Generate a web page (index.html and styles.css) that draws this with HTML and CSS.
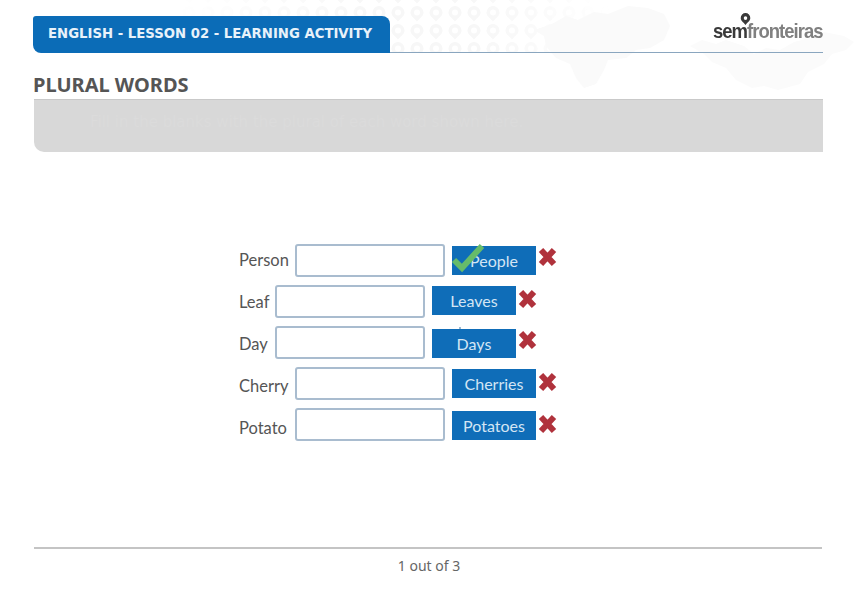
FILE: index.html
```html
<!DOCTYPE html>
<html lang="en">
<head>
    <meta charset="UTF-8">
    <meta name="viewport" content="width=device-width, initial-scale=1.0">
    <title>Plural Words</title>
    <link rel="stylesheet" href="styles.css">
</head>
<body>
    <!-- faint pins and map behind the header -->
    <svg class="watermark" width="860" height="100" viewBox="0 0 860 100" aria-hidden="true">
        <defs>
            <pattern id="pins" x="180" y="5" width="19" height="18" patternUnits="userSpaceOnUse">
                <path d="M9 1a6.500 6.500 0 0 1 6.500 6.500c0 3.500-3.500 5.500-6.500 9c-3-3.500-6.500-5.500-6.500-9a6.500 6.500 0 0 1 6.500-6.500zm0 3.500a3 3 0 1 0 0 6a3 3 0 0 0 0-6z" fill="#f7f7f7"/>
            </pattern>
            <linearGradient id="fade">
                <stop offset="0" stop-color="#fff" stop-opacity="0"/>
                <stop offset="0.45" stop-color="#fff"/>
                <stop offset="0.7" stop-color="#fff"/>
                <stop offset="1" stop-color="#fff" stop-opacity="0"/>
            </linearGradient>
            <mask id="pinfade">
                <rect x="170" y="0" width="440" height="52" fill="url(#fade)"/>
            </mask>
        </defs>
        <rect x="170" y="0" width="440" height="52" fill="url(#pins)" mask="url(#pinfade)"/>
        <path d="M552 24l14-8 12 4 16-8 14 2 20-8 20 2 16 6 6 12-6 14-14 8-14 2-10 8-18 2-4 10-8 14-12 4-8-10-6-14-14-6-10-12-2-10-10-6z" fill="#fafafa"/>
        <path d="M690 46l12-6 14 4 10-4 18 6 10 8 12-6 14 2 14-8 16-4 14-6 20 4 10 6-8 8-14 4-8 10-16 8-8 12-22 6-14-4-12 2-16-8-10-12-14-6-8-8z" fill="#fbfbfb"/>
    </svg>

    <div class="page">
        <header class="top">
            <div class="tab">ENGLISH - LESSON 02 - LEARNING ACTIVITY</div>
            <div class="top-line">
                <div class="logo">
                    <svg class="logo-pin" width="12" height="12" viewBox="0 0 12 13" preserveAspectRatio="none">
                        <path d="M6 0a5.5 5.5 0 0 1 5.5 5.5c0 3-3 4.500-5.500 7.500c-2.500-3-5.500-4.500-5.500-7.500a5.500 5.500 0 0 1 5.500-5.500zm0 3.500a2 2 0 1 0 0 4a2 2 0 0 0 0-4z" fill="#3a3a3a" fill-rule="evenodd"/>
                    </svg>
                    <span class="logo-dark">sem</span><span class="logo-grey">fronteiras</span>
                </div>
            </div>
        </header>

        <h1 class="title">PLURAL WORDS</h1>
        <div class="prompt">Fill in the blanks with the plural of each word shown here.</div>

        <div class="rows">
            <div class="row">
                <label class="word word-wide">Person</label>
                <input class="answer" type="text">
                <div class="key nudge-2">
                    People
                    <svg class="tick" width="34" height="29" viewBox="0 0 34 29">
                        <path d="M3 16l8 8L31 2" fill="none" stroke="#66bb6a" stroke-width="6"/>
                    </svg>
                </div>
                <svg class="cross" width="19" height="20" viewBox="0 0 19 20">
                    <path d="M3 3l13 14M16 3L3 17" stroke="#b0323c" stroke-width="6"/>
                </svg>
            </div>
            <div class="row">
                <label class="word drop-1">Leaf</label>
                <input class="answer" type="text">
                <div class="key nudge-1">Leaves</div>
                <svg class="cross drop-1" width="19" height="20" viewBox="0 0 19 20">
                    <path d="M3 3l13 14M16 3L3 17" stroke="#b0323c" stroke-width="6"/>
                </svg>
            </div>
            <div class="row">
                <label class="word drop-2">Day</label>
                <input class="answer" type="text">
                <div class="key nudge-3">Days<span class="speck"></span></div>
                <svg class="cross drop-1" width="19" height="20" viewBox="0 0 19 20">
                    <path d="M3 3l13 14M16 3L3 17" stroke="#b0323c" stroke-width="6"/>
                </svg>
            </div>
            <div class="row">
                <label class="word word-wide drop-3">Cherry</label>
                <input class="answer" type="text">
                <div class="key nudge-2">Cherries</div>
                <svg class="cross drop-2" width="19" height="20" viewBox="0 0 19 20">
                    <path d="M3 3l13 14M16 3L3 17" stroke="#b0323c" stroke-width="6"/>
                </svg>
            </div>
            <div class="row">
                <label class="word word-wide drop-4">Potato</label>
                <input class="answer" type="text">
                <div class="key nudge-3">Potatoes</div>
                <svg class="cross drop-3" width="19" height="20" viewBox="0 0 19 20">
                    <path d="M3 3l13 14M16 3L3 17" stroke="#b0323c" stroke-width="6"/>
                </svg>
            </div>
        </div>

        <footer class="pager">1 out of 3</footer>
    </div>
</body>
</html>
```

FILE: styles.css
```css
html, body {
    margin: 0;
    height: 100%;
    overflow: hidden;
}
.watermark {
    position: absolute;
    top: 0;
    left: 0;
    z-index: -1;
}
.page {
    padding: 12px 37px 0 33px;
    color: #555;
    font-family: "Noto Sans", sans-serif;
}
.top {
    display: flex;
    height: 41px;
}
.tab {
    align-self: flex-end;
    box-sizing: border-box;
    height: 37px;
    padding: 0 18px 0 15px;
    line-height: 35px;
    font-family: "DejaVu Sans", sans-serif;
    font-size: 13.25px;
    font-weight: bold;
    color: #e8f2fa;
    background-color: #0b6cb7;
    border-radius: 3px 8px 0 8px;
    white-space: nowrap;
}
.top-line {
    flex: 1;
    display: flex;
    justify-content: flex-end;
    align-items: flex-start;
    border-bottom: 1px solid #8aa6bf;
}
.logo {
    position: relative;
    margin-top: 7px;
    font-family: "Liberation Sans", sans-serif;
    font-size: 21px;
    line-height: 24px;
    letter-spacing: -1.1px;
    white-space: nowrap;
    transform: scaleX(0.88);
    transform-origin: right center;
}
.logo-pin {
    position: absolute;
    top: -6px;
    left: 31px;
}
.logo-dark {
    font-weight: bold;
    color: #3a3a3a;
}
.logo-grey {
    font-weight: bold;
    color: #808080;
}
.title {
    margin: 20px 0 0;
    height: 26px;
    line-height: 24px;
    font-size: 20px;
    font-weight: bold;
    color: #555;
}
.prompt {
    box-sizing: border-box;
    height: 53px;
    margin-left: 1px;
    padding: 13px 0 0 56px;
    font-family: "DejaVu Sans", sans-serif;
    font-size: 15px;
    color: #dbdbdb;
    background-color: #d8d8d8;
    border-top: 1px solid #c9c9c9;
    border-bottom-left-radius: 10px;
    white-space: nowrap;
}
.rows {
    display: flex;
    flex-direction: column;
    gap: 8px;
    margin: 92px 0 0 206px;
}
.row {
    display: flex;
    align-items: flex-start;
    height: 33px;
    font-family: Lato, sans-serif;
    font-size: 16.5px;
}
.word {
    width: 36px;
    line-height: 32px;
    color: #555;
}
.word-wide {
    width: 56px;
}
.answer {
    box-sizing: border-box;
    width: 150px;
    height: 33px;
    margin: 0 7px 0 0;
    padding: 0;
    background: #fff;
    border: 2px solid #a9bccf;
    border-radius: 3px;
}
.key {
    position: relative;
    width: 84px;
    height: 29px;
    line-height: 30px;
    text-align: center;
    font-size: 16px;
    color: #d3e5f4;
    background-color: #0f6db8;
}
.nudge-1 {
    margin-top: 1px;
}
.nudge-2 {
    margin-top: 2px;
}
.nudge-3 {
    margin-top: 3px;
}
.tick {
    position: absolute;
    top: -2px;
    left: -1px;
}
.speck {
    position: absolute;
    top: -2px;
    left: 27px;
    width: 2px;
    height: 2px;
    background-color: #9db8cf;
}
.cross {
    margin: 3px 0 0 2px;
}
.word.drop-1 {
    margin-top: 1px;
}
.word.drop-2 {
    margin-top: 2px;
}
.word.drop-3 {
    margin-top: 3px;
}
.word.drop-4 {
    margin-top: 4px;
}
.cross.drop-1 {
    margin-top: 4px;
}
.cross.drop-2 {
    margin-top: 5px;
}
.cross.drop-3 {
    margin-top: 6px;
}
.pager {
    margin: 106px 1px 0;
    padding: 8px 0 0 2px;
    border-top: 2px solid #c4c4c4;
    text-align: center;
    font-size: 14px;
    line-height: 18px;
    color: #666;
}
```
